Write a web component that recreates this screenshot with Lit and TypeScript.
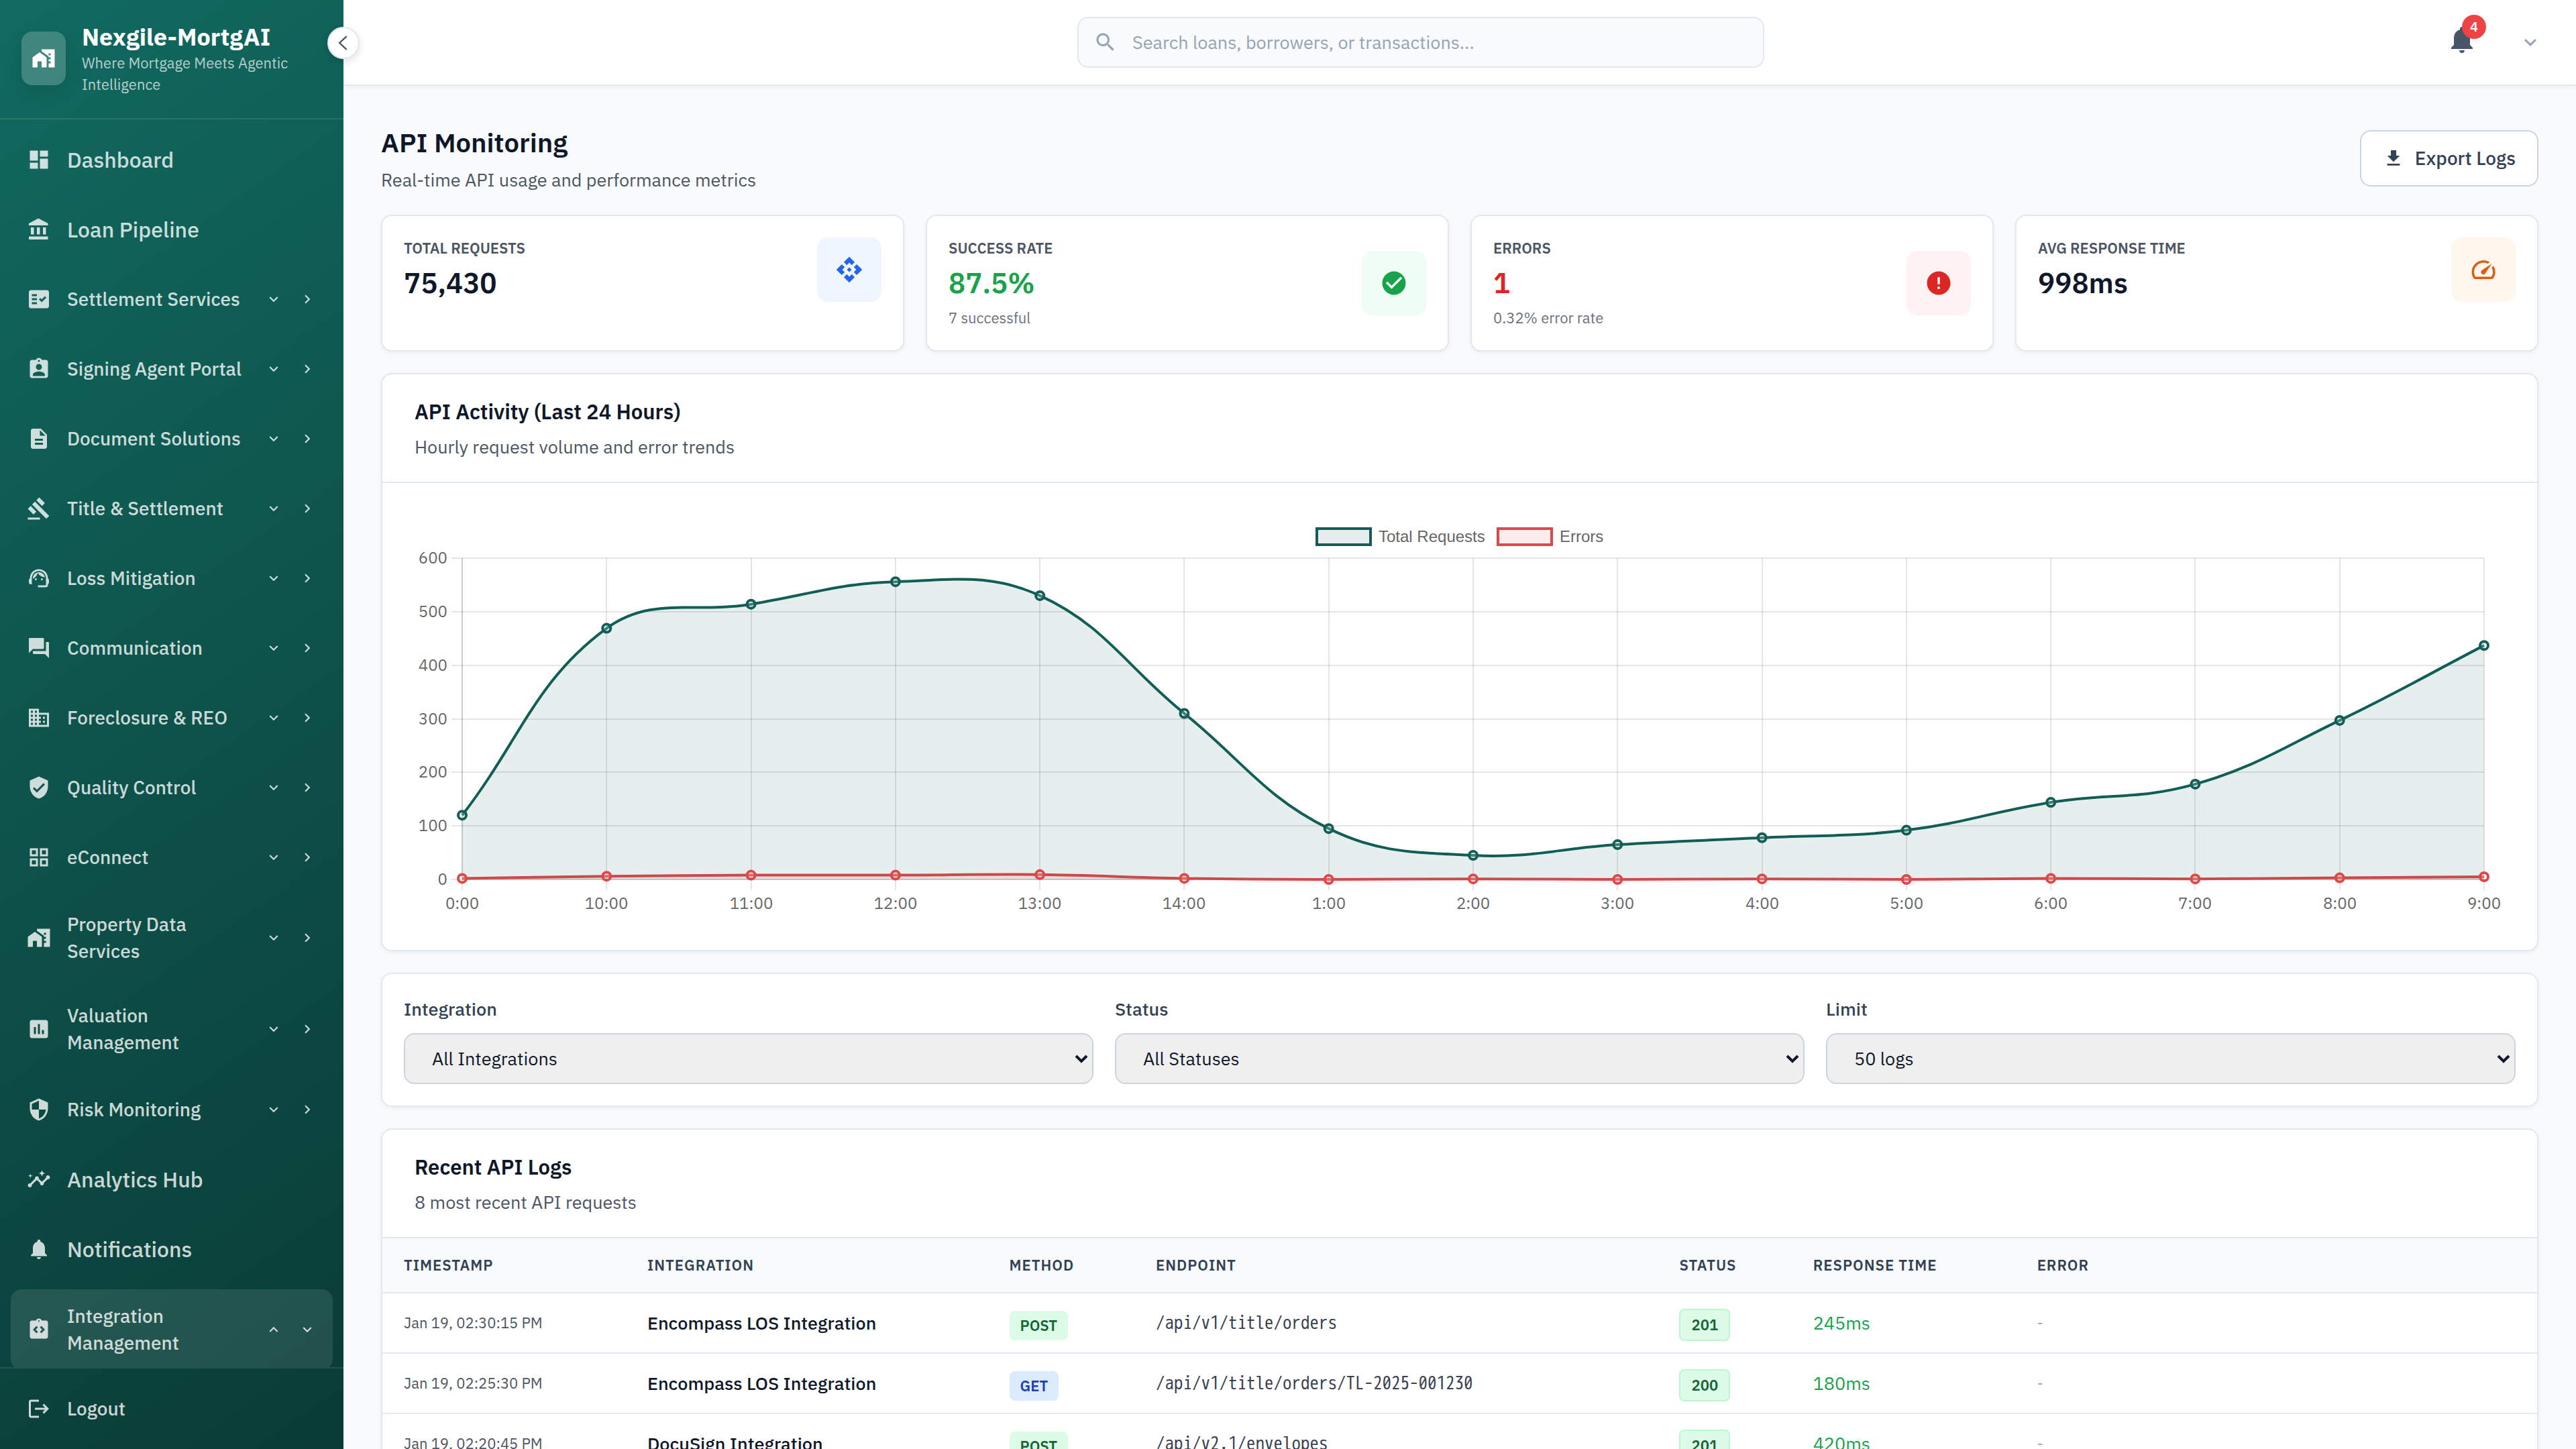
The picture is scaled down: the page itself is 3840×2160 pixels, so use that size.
import { LitElement, html, css, svg, nothing } from "lit";
import { customElement, property } from "lit/decorators.js";
import { classMap } from "lit/directives/class-map.js";

const ICONS: Record<string, string> = {
  dashboard: "M3 13h8V3H3v10zm0 8h8v-6H3v6zm10 0h8V11h-8v10zm0-18v6h8V3h-8z",
  bank: "M4 10v7h3v-7H4zm6 0v7h3v-7h-3zM2 22h19v-3H2v3zm14-12v7h3v-7h-3zm-4.5-9L2 6v2h19V6l-9.5-5z",
  factCheck:
    "M20 3H4c-1.1 0-2 .9-2 2v14c0 1.1.9 2 2 2h16c1.1 0 2-.9 2-2V5c0-1.1-.9-2-2-2zM10 17H5v-2h5v2zm0-4H5v-2h5v2zm0-4H5V7h5v2zm4.82 6L12 12.16l1.41-1.41 1.41 1.42L17.99 9l1.42 1.42L14.82 15z",
  badge:
    "M19 3h-4.18C14.4 1.84 13.3 1 12 1c-1.3 0-2.4.84-2.82 2H5c-1.1 0-2 .9-2 2v14c0 1.1.9 2 2 2h14c1.1 0 2-.9 2-2V5c0-1.1-.9-2-2-2zm-7 0c.55 0 1 .45 1 1s-.45 1-1 1-1-.45-1-1 .45-1 1-1zm0 4c1.66 0 3 1.34 3 3s-1.34 3-3 3-3-1.34-3-3 1.34-3 3-3zm6 12H6v-1.4c0-2 4-3.1 6-3.1s6 1.1 6 3.1V19z",
  document:
    "M14 2H6c-1.1 0-1.99.9-1.99 2L4 20c0 1.1.89 2 1.99 2H18c1.1 0 2-.9 2-2V8l-6-6zm2 16H8v-2h8v2zm0-4H8v-2h8v2zm-3-5V3.5L18.5 9H13z",
  gavel:
    "M1 21h12v2H1v-2zM5.245 8.07l2.83-2.827 14.14 14.142-2.828 2.828L5.245 8.07zM12.317 1l5.657 5.656-2.83 2.83-5.654-5.66L12.317 1zM3.825 9.485l5.657 5.657-2.828 2.828-5.657-5.657 2.828-2.828z",
  agent:
    "M21 12.22C21 6.73 16.74 3 12 3c-4.69 0-9 3.65-9 9.28-.6.34-1 .98-1 1.72v2c0 1.1.9 2 2 2h1v-6.1c0-3.87 3.13-7 7-7s7 3.13 7 7V19h-8v2h8c1.1 0 2-.9 2-2v-1.22c.59-.31 1-.92 1-1.64v-2.3c0-.7-.41-1.31-1-1.62zM8 13a1 1 0 1 0 2 0a1 1 0 1 0-2 0zM14 13a1 1 0 1 0 2 0a1 1 0 1 0-2 0zM18 11.03C17.52 8.18 15.04 6 12.05 6c-3.03 0-6.29 2.51-6.03 6.45 2.47-1.01 4.33-3.21 4.86-5.89 1.31 2.63 4 4.44 7.12 4.47z",
  forum:
    "M21 6h-2v9H6v2c0 .55.45 1 1 1h11l4 4V7c0-.55-.45-1-1-1zm-4 6V3c0-.55-.45-1-1-1H3c-.55 0-1 .45-1 1v14l4-4h10c.55 0 1-.45 1-1z",
  business:
    "M12 7V3H2v18h20V7H12zM6 19H4v-2h2v2zm0-4H4v-2h2v2zm0-4H4V9h2v2zm0-4H4V5h2v2zm4 12H8v-2h2v2zm0-4H8v-2h2v2zm0-4H8V9h2v2zm0-4H8V5h2v2zm10 12h-8v-2h2v-2h-2v-2h2v-2h-2V9h8v10zm-2-8h-2v2h2v-2zm0 4h-2v2h2v-2z",
  verified:
    "M12 1L3 5v6c0 5.55 3.84 10.74 9 12 5.16-1.26 9-6.45 9-12V5l-9-4zm-2 16l-4-4 1.41-1.41L10 14.17l6.59-6.59L18 9l-8 8z",
  grid: "M3 3v8h8V3H3zm6 6H5V5h4v4zm-6 4v8h8v-8H3zm6 6H5v-4h4v4zm4-16v8h8V3h-8zm6 6h-4V5h4v4zm-6 4v8h8v-8h-8zm6 6h-4v-4h4v4z",
  homeWork:
    "M1 11v10h5v-6h4v6h5V11L8 6l-7 5zM10 3v1.97l7 5V11h2v2h-2v2h2v2h-2v4h6V3H10zm9 6h-2V7h2v2z",
  assessment:
    "M19 3H5c-1.1 0-2 .9-2 2v14c0 1.1.9 2 2 2h14c1.1 0 2-.9 2-2V5c0-1.1-.9-2-2-2zM9 17H7v-7h2v7zm4 0h-2V7h2v10zm4 0h-2v-4h2v4z",
  shield:
    "M12 1L3 5v6c0 5.55 3.84 10.74 9 12 5.16-1.26 9-6.45 9-12V5l-9-4zm0 10.99h7c-.53 4.12-3.28 7.79-7 8.94V12H5V6.3l7-3.11v8.8z",
  insights:
    "M21 8c-1.45 0-2.26 1.44-1.93 2.51l-3.55 3.56c-.3-.09-.74-.09-1.04 0l-2.55-2.55C12.27 10.45 11.46 9 10 9c-1.45 0-2.27 1.44-1.93 2.52l-4.56 4.55C2.44 15.74 1 16.55 1 18c0 1.1.9 2 2 2 1.45 0 2.26-1.44 1.93-2.51l4.55-4.56c.3.09.74.09 1.04 0l2.55 2.55C12.73 16.55 13.54 18 15 18c1.45 0 2.27-1.44 1.93-2.52l3.56-3.55c1.07.33 2.51-.48 2.51-1.93 0-1.1-.9-2-2-2zM15 9l.94-2.07L18 6l-2.06-.93L15 3l-.92 2.07L12 6l2.08.93zM3.5 11L4 9l2-.5L4 8l-.5-2L3 8l-2 .5L3 9z",
  bell: "M12 22c1.1 0 2-.9 2-2h-4c0 1.1.89 2 2 2zm6-6v-5c0-3.07-1.64-5.64-4.5-6.32V4c0-.83-.67-1.5-1.5-1.5s-1.5.67-1.5 1.5v.68C7.63 5.36 6 7.92 6 11v5l-2 2v1h16v-1l-2-2z",
  integration:
    "M19 3h-4.18C14.4 1.84 13.3 1 12 1s-2.4.84-2.82 2H5c-1.1 0-2 .9-2 2v14c0 1.1.9 2 2 2h14c1.1 0 2-.9 2-2V5c0-1.1-.9-2-2-2zm-8 11.17l-1.41 1.42L6 12l3.59-3.59L11 9.83 8.83 12 11 14.17zm1-9.92c-.41 0-.75-.34-.75-.75s.34-.75.75-.75.75.34.75.75-.34.75-.75.75zm2.41 11.34L13 14.17 15.17 12 13 9.83l1.41-1.42L18 12l-3.59 3.59z",
  logout:
    "M17 7l-1.41 1.41L18.17 11H8v2h10.17l-2.58 2.58L17 17l5-5zM4 5h8V3H4c-1.1 0-2 .9-2 2v14c0 1.1.9 2 2 2h8v-2H4V5z",
  search:
    "M15.5 14h-.79l-.28-.27C15.41 12.59 16 11.11 16 9.5 16 5.91 13.09 3 9.5 3S3 5.91 3 9.5 5.91 16 9.5 16c1.61 0 3.09-.59 4.23-1.57l.27.28v.79l5 4.99L20.49 19l-4.99-5zm-6 0C7.01 14 5 11.99 5 9.5S7.01 5 9.5 5 14 7.01 14 9.5 11.99 14 9.5 14z",
  download: "M19 9h-4V3H9v6H5l7 7 7-7zM5 18v2h14v-2H5z",
  api: "M14 12l-2 2-2-2 2-2 2 2zm-2-6l2.12 2.12 2.5-2.5L12 1 7.38 5.62l2.5 2.5L12 6zm-6 6l2.12-2.12-2.5-2.5L1 12l4.62 4.62 2.5-2.5L6 12zm12 0l-2.12 2.12 2.5 2.5L23 12l-4.62-4.62-2.5 2.5L18 12zm-6 6l-2.12-2.12-2.5 2.5L12 23l4.62-4.62-2.5-2.5L12 18z",
  check:
    "M12 2C6.48 2 2 6.48 2 12s4.48 10 10 10 10-4.48 10-10S17.52 2 12 2zm-2 15l-5-5 1.41-1.41L10 14.17l7.59-7.59L19 8l-9 9z",
  error:
    "M12 2C6.48 2 2 6.48 2 12s4.48 10 10 10 10-4.48 10-10S17.52 2 12 2zm1 15h-2v-2h2v2zm0-4h-2V7h2v6z",
  speed:
    "M20.38 8.57l-1.23 1.85a8 8 0 0 1-.22 7.58H5.07A8 8 0 0 1 15.58 6.85l1.85-1.23A10 10 0 0 0 3.35 19a2 2 0 0 0 1.72 1h13.85a2 2 0 0 0 1.74-1 10 10 0 0 0-.27-10.44zM10.59 15.41a2 2 0 0 0 2.83 0l5.66-8.49-8.49 5.66a2 2 0 0 0 0 2.83z",
  down: "M16.59 8.59L12 13.17 7.41 8.59 6 10l6 6 6-6z",
  up: "M12 8l-6 6 1.41 1.41L12 10.83l4.59 4.58L18 14z",
  right: "M10 6L8.59 7.41 13.17 12l-4.58 4.59L10 18l6-6z",
};

const icon = (name: string, cls = "") =>
  html`<svg class="icon ${cls}" viewBox="0 0 24 24" aria-hidden="true"><path d=${ICONS[name]} /></svg>`;

interface NavItem {
  label: string;
  icon: string;
  group?: boolean;
  open?: boolean;
}

const NAV: NavItem[] = [
  { label: "Dashboard", icon: "dashboard" },
  { label: "Loan Pipeline", icon: "bank" },
  { label: "Settlement Services", icon: "factCheck", group: true },
  { label: "Signing Agent Portal", icon: "badge", group: true },
  { label: "Document Solutions", icon: "document", group: true },
  { label: "Title & Settlement", icon: "gavel", group: true },
  { label: "Loss Mitigation", icon: "agent", group: true },
  { label: "Communication", icon: "forum", group: true },
  { label: "Foreclosure & REO", icon: "business", group: true },
  { label: "Quality Control", icon: "verified", group: true },
  { label: "eConnect", icon: "grid", group: true },
  { label: "Property Data Services", icon: "homeWork", group: true },
  { label: "Valuation Management", icon: "assessment", group: true },
  { label: "Risk Monitoring", icon: "shield", group: true },
  { label: "Analytics Hub", icon: "insights" },
  { label: "Notifications", icon: "bell" },
  { label: "Integration Management", icon: "integration", group: true, open: true },
];

const STATS = [
  { label: "Total Requests", value: "75,430", note: "", icon: "api", tone: "blue" },
  { label: "Success Rate", value: "87.5%", note: "7 successful", icon: "check", tone: "green" },
  { label: "Errors", value: "1", note: "0.32% error rate", icon: "error", tone: "red" },
  { label: "Avg Response Time", value: "998ms", note: "", icon: "speed", tone: "orange" },
];

const FILTERS = [
  { id: "integration", label: "Integration", value: "All Integrations" },
  { id: "status", label: "Status", value: "All Statuses" },
  { id: "limit", label: "Limit", value: "50 logs" },
];

const COLUMNS = [
  { name: "Timestamp", cls: "w-time" },
  { name: "Integration", cls: "w-integration" },
  { name: "Method", cls: "w-method" },
  { name: "Endpoint", cls: "w-endpoint" },
  { name: "Status", cls: "w-status" },
  { name: "Response Time", cls: "w-response" },
  { name: "Error", cls: "w-error" },
];

const LOGS = [
  { time: "Jan 19, 02:30:15 PM", name: "Encompass LOS Integration", method: "POST", path: "/api/v1/title/orders", status: 201, ms: 245 },
  { time: "Jan 19, 02:25:30 PM", name: "Encompass LOS Integration", method: "GET", path: "/api/v1/title/orders/TL-2025-001230", status: 200, ms: 180 },
  { time: "Jan 19, 02:20:45 PM", name: "DocuSign Integration", method: "POST", path: "/api/v2.1/envelopes", status: 201, ms: 420 },
];

const HOURS = ["0:00", "10:00", "11:00", "12:00", "13:00", "14:00", "1:00", "2:00", "3:00", "4:00", "5:00", "6:00", "7:00", "8:00", "9:00"];
const TOTALS = [120, 469, 514, 556, 530, 310, 95, 45, 65, 78, 92, 144, 178, 297, 437];
const ERRORS = [2, 6, 8, 8, 9, 2, 0, 1, 0, 1, 0, 2, 1, 3, 5];

type Point = { x: number; y: number };

@customElement("activity-chart")
export class ActivityChart extends LitElement {
  @property({ attribute: false }) totals: number[] = TOTALS;
  @property({ attribute: false }) errors: number[] = ERRORS;

  static styles = css`
    :host {
      display: block;
    }
    .chart {
      display: block;
      width: 100%;
      height: auto;
    }
    text {
      fill: #666666;
      font-size: 24px;
    }
    .tick {
      font-family: "IBM Plex Sans", Roboto, sans-serif;
    }
    .legend {
      font-family: "Liberation Sans", Arial, sans-serif;
    }
    .grid {
      stroke: rgba(0, 0, 0, 0.1);
      stroke-width: 2;
    }
    .total {
      stroke: #115e56;
      stroke-width: 4;
      fill: none;
    }
    .total-fill {
      fill: rgba(17, 94, 86, 0.1);
    }
    .error {
      stroke: #e04848;
      stroke-width: 4;
      fill: none;
    }
    .error-fill {
      fill: rgba(239, 68, 68, 0.1);
    }
    .shade {
      stroke: none;
    }
    .dot {
      fill: rgba(255, 255, 255, 0.2);
    }
  `;

  private readonly area = { left: 71, right: 3085, top: 64, bottom: 543 };

  private points(values: number[]): Point[] {
    const { left, right, top, bottom } = this.area;
    const step = (right - left) / (values.length - 1);
    return values.map((v, i) => ({ x: left + i * step, y: bottom - (v / 600) * (bottom - top) }));
  }

  /** Smooth path through the points, control points weighted by neighbour distance. */
  private curve(pts: Point[]): string {
    const tension = 0.4;
    const clamp = (y: number) => Math.min(this.area.bottom, Math.max(this.area.top, y));
    const controls = pts.map((p, i) => {
      const a = pts[Math.max(0, i - 1)];
      const b = pts[Math.min(pts.length - 1, i + 1)];
      const d1 = Math.hypot(p.x - a.x, p.y - a.y);
      const d2 = Math.hypot(b.x - p.x, b.y - p.y);
      const fa = (tension * d1) / (d1 + d2);
      const fb = (tension * d2) / (d1 + d2);
      return {
        before: { x: p.x - fa * (b.x - a.x), y: clamp(p.y - fa * (b.y - a.y)) },
        after: { x: p.x + fb * (b.x - a.x), y: clamp(p.y + fb * (b.y - a.y)) },
      };
    });
    return pts
      .map((p, i) => {
        if (i === 0) return `M${p.x} ${p.y}`;
        const c1 = controls[i - 1].after;
        const c2 = controls[i].before;
        return `C${c1.x} ${c1.y} ${c2.x} ${c2.y} ${p.x} ${p.y}`;
      })
      .join("");
  }

  render() {
    const { left, right, top, bottom } = this.area;
    const totals = this.points(this.totals);
    const errors = this.points(this.errors);
    const totalLine = this.curve(totals);
    const errorLine = this.curve(errors);
    const close = `L${right} ${bottom}L${left} ${bottom}Z`;
    const levels = [0, 100, 200, 300, 400, 500, 600];
    return html`
      <svg class="chart" viewBox="0 0 3116 600" role="img" aria-label="Hourly request volume and errors">
        <rect class="total total-fill" x="1345" y="20" width="80" height="24" />
        <text class="legend" x="1437" y="40">Total Requests</text>
        <rect class="error error-fill" x="1615" y="20" width="80" height="24" />
        <text class="legend" x="1707" y="40">Errors</text>
        ${levels.map((v) => {
          const y = Math.round(bottom - (v / 600) * (bottom - top));
          return svg`
            <line class="grid" x1=${left - 16} y1=${y} x2=${right} y2=${y} />
            <text class="tick" x="49" y=${y + 8} text-anchor="end">${v}</text>`;
        })}
        ${totals.map((p, i) => {
          const x = Math.round(p.x);
          return svg`
            <line class="grid" x1=${x} y1=${top} x2=${x} y2=${bottom + 16} />
            <text class="tick" x=${x} y="587" text-anchor="middle">${HOURS[i]}</text>`;
        })}
        <line class="grid" x1=${left} y1=${top} x2=${left} y2=${bottom} />
        <line class="grid" x1=${left} y1=${bottom} x2=${right} y2=${bottom} />
        <path class="shade error-fill" d=${errorLine + close} />
        <path class="error" d=${errorLine} />
        <path class="shade total-fill" d=${totalLine + close} />
        <path class="total" d=${totalLine} />
        ${errors.map((p) => svg`<circle class="error dot" cx=${p.x} cy=${p.y} r="6" />`)}
        ${totals.map((p) => svg`<circle class="total dot" cx=${p.x} cy=${p.y} r="6" />`)}
      </svg>
    `;
  }
}

@customElement("app-root")
export class AppRoot extends LitElement {
  static styles = css`
    :host {
      display: block;
      height: 100vh;
      overflow: hidden;
      font-family: "IBM Plex Sans", Roboto, sans-serif;
      font-size: 27px;
      line-height: 40px;
      color: #0f172a;
    }
    *,
    *::before,
    *::after {
      box-sizing: border-box;
    }
    h1,
    h2,
    p {
      margin: 0;
    }
    button,
    input,
    select {
      font: inherit;
      color: inherit;
    }
    button {
      border: 0;
      padding: 0;
      background: none;
      cursor: pointer;
    }
    .icon {
      display: block;
      flex: none;
      width: 36px;
      height: 36px;
      fill: currentColor;
      fill-rule: evenodd;
    }
    .icon.small {
      width: 26px;
      height: 26px;
    }
    .icon.medium {
      width: 32px;
      height: 32px;
    }
    .icon.stat {
      width: 42px;
      height: 42px;
    }
    .icon.large {
      width: 48px;
      height: 48px;
    }

    .layout {
      display: grid;
      grid-template-columns: 512px minmax(0, 1fr);
      height: 100%;
    }

    .sidebar {
      position: relative;
      z-index: 1;
      display: flex;
      flex-direction: column;
      min-height: 0;
      color: rgba(255, 255, 255, 0.8);
      background: linear-gradient(145deg, #116a60 0%, #0a3b36 100%);
    }
    .brand {
      display: flex;
      align-items: center;
      gap: 24px;
      padding: 32px 32px 34px;
      border-bottom: 2px solid rgba(255, 255, 255, 0.1);
    }
    .logo {
      display: grid;
      place-items: center;
      flex: none;
      width: 66px;
      height: 80px;
      border-radius: 16px;
      color: #ffffff;
      background: rgba(255, 255, 255, 0.2);
      box-shadow: 0 8px 24px rgba(0, 0, 0, 0.1);
    }
    .brand-name {
      font-size: 36px;
      line-height: 46px;
      font-weight: 700;
      color: #ffffff;
    }
    .brand-tag {
      font-size: 22px;
      line-height: 32px;
      color: rgba(255, 255, 255, 0.7);
    }
    .collapse {
      position: absolute;
      top: 40px;
      right: -24px;
      display: grid;
      place-items: center;
      width: 48px;
      height: 48px;
      border: 2px solid #e2e8f0;
      border-radius: 50%;
      background: #ffffff;
      box-shadow: 0 4px 12px rgba(0, 0, 0, 0.12);
    }
    .collapse-arrow {
      width: 28px;
      height: 28px;
      fill: none;
      stroke: #475569;
      stroke-width: 2;
    }
    .nav {
      flex: 1;
      min-height: 0;
      overflow: hidden;
      display: flex;
      flex-direction: column;
      gap: 16px;
      padding: 16px;
    }
    .nav-item {
      flex: none;
      display: flex;
      align-items: center;
      min-height: 88px;
      padding: 20px 14px 20px 24px;
      border-radius: 16px;
    }
    .nav-item.open {
      background: rgba(255, 255, 255, 0.1);
    }
    .nav-link {
      flex: 1;
      min-width: 0;
      display: flex;
      align-items: center;
      gap: 24px;
      color: inherit;
      text-decoration: none;
      text-align: left;
      font-size: 32px;
      font-weight: 500;
    }
    .nav-link.sub,
    .nav-link.exit {
      font-size: 28px;
    }
    .toggles {
      display: flex;
      gap: 2px;
    }
    .toggle {
      display: grid;
      place-items: center;
      width: 48px;
      height: 48px;
    }
    .sidebar-foot {
      padding: 16px;
      border-top: 2px solid rgba(255, 255, 255, 0.1);
    }

    .page {
      display: flex;
      flex-direction: column;
      min-width: 0;
      min-height: 0;
      background: #f9fafc;
    }
    .topbar {
      flex: none;
      display: flex;
      align-items: center;
      height: 128px;
      padding: 0 48px 0 90px;
      background: #ffffff;
      border-bottom: 2px solid #e2e8f0;
      box-shadow: 0 2px 6px rgba(0, 0, 0, 0.05);
    }
    .search {
      display: flex;
      align-items: center;
      gap: 22px;
      width: 1024px;
      height: 76px;
      margin: 0 auto;
      padding: 0 22px;
      border: 2px solid #e2e8f0;
      border-radius: 16px;
      background: #f8fafc;
      color: #94a3b8;
    }
    .search-input {
      flex: 1;
      min-width: 0;
      padding: 0;
      border: 0;
      outline: 0;
      background: none;
      color: #0f172a;
    }
    .search-input::placeholder {
      color: #94a3b8;
      opacity: 1;
    }
    .actions {
      display: flex;
      align-items: center;
      gap: 46px;
      color: #475569;
    }
    .bell {
      position: relative;
      display: grid;
      place-items: center;
      width: 72px;
      height: 72px;
      padding-bottom: 8px;
    }
    .bell-count {
      position: absolute;
      top: -5px;
      right: 0;
      width: 36px;
      height: 36px;
      border-radius: 50%;
      background: #ef4444;
      color: #ffffff;
      font-size: 20px;
      line-height: 36px;
      font-weight: 600;
      text-align: center;
    }
    .profile {
      display: grid;
      place-items: center;
      width: 40px;
      height: 40px;
      color: #94a3b8;
    }

    .content {
      flex: 1;
      min-height: 0;
      overflow: hidden;
      display: flex;
      flex-direction: column;
      gap: 32px;
      padding: 56px;
    }
    .content > * {
      flex: none;
    }
    .heading {
      display: flex;
      align-items: center;
      justify-content: space-between;
    }
    .heading-text,
    .card-head {
      display: flex;
      flex-direction: column;
      gap: 8px;
    }
    .title {
      font-size: 40px;
      line-height: 56px;
      font-weight: 600;
    }
    .muted {
      color: #4b5563;
    }
    .export {
      display: flex;
      align-items: center;
      gap: 16px;
      height: 84px;
      padding: 0 32px;
      border: 2px solid #cbd5e1;
      border-radius: 16px;
      background: #ffffff;
      color: #334155;
      font-size: 28px;
      font-weight: 500;
    }

    .card {
      border: 2px solid #e2e8f0;
      border-radius: 16px;
      background: #ffffff;
      box-shadow: 0 2px 6px rgba(15, 23, 42, 0.06);
      overflow: hidden;
    }
    .card-head {
      padding: 32px 48px;
      border-bottom: 2px solid #e2e8f0;
    }
    .card-title {
      font-size: 31px;
      line-height: 48px;
      font-weight: 600;
    }

    .stats {
      display: grid;
      grid-template-columns: repeat(4, minmax(0, 1fr));
      gap: 32px;
    }
    .stat-card {
      padding: 32px;
    }
    .stat-row {
      display: flex;
      align-items: center;
      justify-content: space-between;
    }
    .stat-text {
      display: flex;
      flex-direction: column;
      gap: 8px;
    }
    .stat-label {
      font-size: 22px;
      line-height: 32px;
      font-weight: 600;
      text-transform: uppercase;
      color: #4b5563;
    }
    .stat-value {
      font-size: 42px;
      line-height: 56px;
      font-weight: 600;
    }
    .stat-note {
      font-size: 22px;
      line-height: 32px;
      color: #6b7280;
    }
    .stat-icon {
      display: grid;
      place-items: center;
      width: 96px;
      height: 96px;
      border-radius: 16px;
    }
    .stat-icon.blue {
      background: #eff6ff;
      color: #2563eb;
    }
    .stat-icon.green {
      background: #f0fdf4;
      color: #16a34a;
    }
    .stat-icon.red {
      background: #fef2f2;
      color: #dc2626;
    }
    .stat-icon.orange {
      background: #fff7ed;
      color: #e05a12;
    }
    .stat-value.green {
      color: #16a34a;
    }
    .stat-value.red {
      color: #dc2626;
    }

    .chart-body {
      padding: 48px;
    }

    .filters {
      display: grid;
      grid-template-columns: repeat(3, minmax(0, 1fr));
      gap: 32px;
      padding: 32px;
    }
    .filter {
      display: flex;
      flex-direction: column;
      gap: 16px;
    }
    .filter-label {
      font-weight: 500;
      color: #334155;
    }
    .select-box {
      display: grid;
      align-items: center;
    }
    .select {
      grid-area: 1 / 1;
      appearance: none;
      width: 100%;
      height: 76px;
      padding: 0 40px;
      border: 2px solid #cbd5e1;
      border-radius: 16px;
      background: #efefef;
    }
    .select-arrow {
      grid-area: 1 / 1;
      justify-self: end;
      width: 20px;
      height: 14px;
      margin-right: 8px;
      fill: none;
      stroke: #0f172a;
      stroke-width: 4;
      pointer-events: none;
    }

    .table {
      width: 100%;
      table-layout: fixed;
      border-collapse: separate;
      border-spacing: 0;
    }
    .w-time {
      width: 11.3%;
    }
    .w-integration {
      width: 16.8%;
    }
    .w-method {
      width: 6.8%;
    }
    .w-endpoint {
      width: 24.3%;
    }
    .w-status {
      width: 6.2%;
    }
    .w-response {
      width: 10.4%;
    }
    .th {
      height: 82px;
      padding: 0 32px;
      border-bottom: 2px solid #e2e8f0;
      background: #f8fafc;
      font-size: 22px;
      line-height: 32px;
      font-weight: 600;
      letter-spacing: 1px;
      text-align: left;
      text-transform: uppercase;
      color: #334155;
    }
    .td {
      height: 90px;
      padding: 0 32px;
      border-bottom: 2px solid #e2e8f0;
      vertical-align: middle;
      white-space: nowrap;
    }
    .td.time {
      font-size: 22px;
      color: #4b5563;
    }
    .td.name {
      font-weight: 500;
    }
    .td.path {
      font-family: "WenQuanYi Zen Hei Mono", "Noto Sans Mono CJK SC", monospace;
      color: #374151;
    }
    .td.tagged {
      padding-top: 6px;
    }
    .td.response {
      color: #16a34a;
    }
    .td.none {
      font-size: 22px;
      color: #9ca3af;
    }
    .tag {
      display: inline-block;
      vertical-align: middle;
      padding: 0 16px;
      border-radius: 8px;
      font-size: 22px;
      line-height: 44px;
      font-weight: 600;
    }
    .tag.post {
      background: #dcfce7;
      color: #166534;
    }
    .tag.get {
      background: #dbeafe;
      color: #1e40af;
    }
    .tag.ok {
      border: 2px solid #bbf7d0;
      background: #dcfce7;
      color: #166534;
    }
  `;

  private navItem(item: NavItem) {
    return html`
      <div class=${classMap({ "nav-item": true, open: !!item.open })}>
        <a class=${classMap({ "nav-link": true, sub: !!item.group })} href="#">
          ${icon(item.icon)}<span>${item.label}</span>
        </a>
        ${item.group
          ? html`<div class="toggles">
              <button class="toggle" aria-label="Toggle ${item.label}">${icon(item.open ? "up" : "down", "small")}</button>
              <button class="toggle" aria-label="Open ${item.label}">${icon(item.open ? "down" : "right", "small")}</button>
            </div>`
          : nothing}
      </div>
    `;
  }

  private sidebar() {
    return html`
      <aside class="sidebar">
        <div class="brand">
          <div class="logo">${icon("homeWork")}</div>
          <div>
            <div class="brand-name">Nexgile-MortgAI</div>
            <div class="brand-tag">Where Mortgage Meets Agentic Intelligence</div>
          </div>
        </div>
        <button class="collapse" aria-label="Collapse sidebar">
          <svg class="collapse-arrow" viewBox="0 0 24 24"><path d="M16 3.500l-9 8.500 9 8.500" /></svg>
        </button>
        <nav class="nav">${NAV.map((item) => this.navItem(item))}</nav>
        <div class="sidebar-foot">
          <div class="nav-item">
            <button class="nav-link exit">${icon("logout")}<span>Logout</span></button>
          </div>
        </div>
      </aside>
    `;
  }

  private topbar() {
    return html`
      <header class="topbar">
        <label class="search">
          ${icon("search")}
          <input
            class="search-input"
            type="search"
            aria-label="Search"
            placeholder="Search loans, borrowers, or transactions..."
          />
        </label>
        <div class="actions">
          <button class="bell" aria-label="Notifications">
            ${icon("bell", "large")}<span class="bell-count">4</span>
          </button>
          <button class="profile" aria-label="Account menu">${icon("down")}</button>
        </div>
      </header>
    `;
  }

  private stats() {
    return html`
      <section class="stats">
        ${STATS.map(
          (s) => html`
            <div class="card stat-card">
              <div class="stat-row">
                <div class="stat-text">
                  <p class="stat-label">${s.label}</p>
                  <p class="stat-value ${s.tone}">${s.value}</p>
                  ${s.note ? html`<p class="stat-note">${s.note}</p>` : nothing}
                </div>
                <div class="stat-icon ${s.tone}">${icon(s.icon, "stat")}</div>
              </div>
            </div>
          `,
        )}
      </section>
    `;
  }

  private filters() {
    return html`
      <section class="card filters">
        ${FILTERS.map(
          (f) => html`
            <div class="filter">
              <label class="filter-label" for=${f.id}>${f.label}</label>
              <div class="select-box">
                <select class="select" id=${f.id}>
                  <option>${f.value}</option>
                </select>
                <svg class="select-arrow" viewBox="0 0 20 14"><path d="M2 3l8 8 8-8" /></svg>
              </div>
            </div>
          `,
        )}
      </section>
    `;
  }

  private logs() {
    return html`
      <section class="card">
        <div class="card-head">
          <h2 class="card-title">Recent API Logs</h2>
          <p class="muted">8 most recent API requests</p>
        </div>
        <table class="table">
          <thead>
            <tr>
              ${COLUMNS.map((c) => html`<th class="th ${c.cls}" scope="col">${c.name}</th>`)}
            </tr>
          </thead>
          <tbody>
            ${LOGS.map(
              (r) => html`
                <tr>
                  <td class="td time">${r.time}</td>
                  <td class="td name">${r.name}</td>
                  <td class="td tagged"><span class="tag ${r.method.toLowerCase()}">${r.method}</span></td>
                  <td class="td path">${r.path}</td>
                  <td class="td tagged"><span class="tag ok">${r.status}</span></td>
                  <td class="td response">${r.ms}ms</td>
                  <td class="td none">-</td>
                </tr>
              `,
            )}
          </tbody>
        </table>
      </section>
    `;
  }

  render() {
    return html`
      <div class="layout">
        ${this.sidebar()}
        <div class="page">
          ${this.topbar()}
          <main class="content">
            <div class="heading">
              <div class="heading-text">
                <h1 class="title">API Monitoring</h1>
                <p class="muted">Real-time API usage and performance metrics</p>
              </div>
              <button class="export">${icon("download", "medium")}Export Logs</button>
            </div>
            ${this.stats()}
            <section class="card">
              <div class="card-head">
                <h2 class="card-title">API Activity (Last 24 Hours)</h2>
                <p class="muted">Hourly request volume and error trends</p>
              </div>
              <div class="chart-body"><activity-chart></activity-chart></div>
            </section>
            ${this.filters()} ${this.logs()}
          </main>
        </div>
      </div>
    `;
  }
}
